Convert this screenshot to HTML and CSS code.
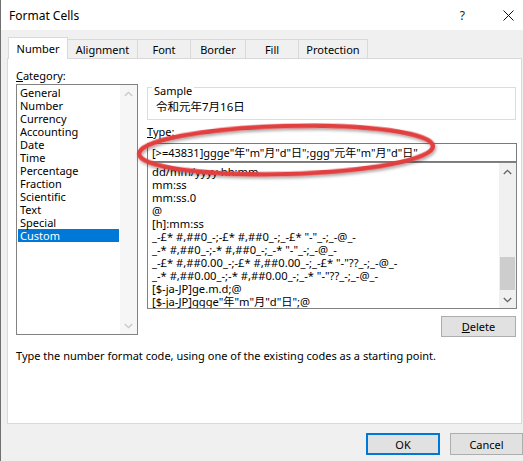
FILE: index.html
```html
<!DOCTYPE html>
<html lang="en">
<head>
<meta charset="utf-8">
<title>Format Cells</title>
<link rel="stylesheet" href="styles.css">
</head>
<body>
<div class="window">
  <div class="titlebar">
    <span class="title">Format Cells</span>
    <span class="help">?</span>
    <svg class="close" width="11" height="11" viewBox="0 0 11 11"><path d="M0.5 0.5 L10.5 10.5 M10.5 0.5 L0.5 10.5" stroke="#111" stroke-width="1" fill="none"/></svg>
  </div>
  <div class="content">
    <div class="tabs">
      <div class="tab active w-number">Number</div>
      <div class="tab w-align">Alignment</div>
      <div class="tab w-font">Font</div>
      <div class="tab w-border">Border</div>
      <div class="tab w-fill">Fill</div>
      <div class="tab w-prot">Protection</div>
    </div>
    <div class="panel">
      <div class="cols">
        <div class="left">
          <div class="label cat-label"><u>C</u>ategory:</div>
          <div class="listbox cat-list">
            <div class="rows cat-rows">
              <div class="row">General</div>
              <div class="row">Number</div>
              <div class="row">Currency</div>
              <div class="row">Accounting</div>
              <div class="row">Date</div>
              <div class="row">Time</div>
              <div class="row">Percentage</div>
              <div class="row">Fraction</div>
              <div class="row">Scientific</div>
              <div class="row">Text</div>
              <div class="row">Special</div>
              <div class="row selected">Custom</div>
            </div>
            <div class="scrollbar disabled">
              <div class="arrow"><svg width="9" height="6" viewBox="0 0 9 6"><path d="M0.8 5 L4.5 1.3 L8.2 5" fill="none" stroke="currentColor" stroke-width="1.3"/></svg></div>
              <div class="track"></div>
              <div class="arrow"><svg width="9" height="6" viewBox="0 0 9 6"><path d="M0.8 1 L4.5 4.7 L8.2 1" fill="none" stroke="currentColor" stroke-width="1.3"/></svg></div>
            </div>
          </div>
        </div>
        <div class="right">
          <fieldset class="sample">
            <legend>Sample</legend>
            <div class="sample-text">令和元年7月16日</div>
          </fieldset>
          <div class="label type-label"><u>T</u>ype:</div>
          <div class="input">[&gt;=43831]ggge"年"m"月"d"日";ggg"元年"m"月"d"日"</div>
          <div class="listbox type-list">
            <div class="rows type-rows">
              <div class="row">dd/mm/yyyy hh:mm</div>
              <div class="row">mm:ss</div>
              <div class="row">mm:ss.0</div>
              <div class="row">@</div>
              <div class="row">[h]:mm:ss</div>
              <div class="row">_-£* #,##0_-;-£* #,##0_-;_-£* "-"_-;_-@_-</div>
              <div class="row">_-* #,##0_-;-* #,##0_-;_-* "-"_-;_-@_-</div>
              <div class="row">_-£* #,##0.00_-;-£* #,##0.00_-;_-£* "-"??_-;_-@_-</div>
              <div class="row">_-* #,##0.00_-;-* #,##0.00_-;_-* "-"??_-;_-@_-</div>
              <div class="row">[$-ja-JP]ge.m.d;@</div>
              <div class="row">[$-ja-JP]ggge"年"m"月"d"日";@</div>
            </div>
            <div class="scrollbar">
              <div class="arrow"><svg width="9" height="6" viewBox="0 0 9 6"><path d="M0.8 5 L4.5 1.3 L8.2 5" fill="none" stroke="currentColor" stroke-width="1.3"/></svg></div>
              <div class="track"><div class="thumb"></div></div>
              <div class="arrow"><svg width="9" height="6" viewBox="0 0 9 6"><path d="M0.8 1 L4.5 4.7 L8.2 1" fill="none" stroke="currentColor" stroke-width="1.3"/></svg></div>
            </div>
          </div>
          <div class="delete-row"><button class="btn delete"><u>D</u>elete</button></div>
        </div>
      </div>
      <p class="desc">Type the number format code, using one of the existing codes as a starting point.</p>
    </div>
    <div class="footer">
      <button class="btn ok">OK</button>
      <button class="btn cancel">Cancel</button>
    </div>
  </div>
  <svg class="annotation" width="523" height="461" viewBox="0 0 523 461">
    <defs>
      <filter id="sh" x="-10%" y="-50%" width="120%" height="200%">
        <feDropShadow dx="1" dy="2" stdDeviation="1.5" flood-color="#000" flood-opacity="0.35"/>
      </filter>
    </defs>
    <ellipse cx="286" cy="150" rx="147" ry="24" transform="rotate(-1.5 286 150)" fill="none" stroke="#e23f3f" stroke-width="4.5" filter="url(#sh)"/>
  </svg>
</div>
</body>
</html>
```
FILE: styles.css
```css
* { box-sizing: border-box; }
html, body { margin: 0; padding: 0; }
body {
  width: 523px;
  height: 461px;
  overflow: hidden;
  background: #f0f0f0;
  font-family: "Noto Sans", "Noto Sans CJK JP", sans-serif;
  font-size: 11px;
  color: #000;
}
.window {
  position: relative;
  width: 523px;
  height: 461px;
  border-left: 1px solid #707070;
  background: #f0f0f0;
}
.titlebar {
  height: 30px;
  background: #fff;
  display: flex;
  align-items: center;
  padding-left: 8px;
  font-size: 12px;
}
.title { flex: 1; }
.help { font-size: 12px; color: #222; }
.close { margin-left: 38px; margin-right: 9px; }

.content { padding-top: 7px; }
.tabs {
  display: flex;
  align-items: flex-end;
  margin-left: 7px;
  height: 21px;
}
.tab {
  height: 19px;
  border: 1px solid #d9d9d9;
  border-bottom: none;
  margin-left: -1px;
  background: #f0f0f0;
  text-align: center;
  line-height: 18px;
  padding-top: 1px;
}
.tab:first-child { margin-left: 0; }
.tab.active {
  height: 22px;
  margin-bottom: -1px;
  background: #fff;
  position: relative;
  z-index: 1;
  line-height: 20px;
  padding-top: 1px;
}
.w-number { width: 60px; }
.w-align { width: 71px; }
.w-font { width: 54px; }
.w-border { width: 56px; }
.w-fill { width: 54px; }
.w-prot { width: 70px; }

.panel {
  margin-left: 6px;
  width: 515px;
  height: 366px;
  border: 1px solid #d9d9d9;
  background: #fff;
  padding-left: 8px;
}
.cols { display: flex; align-items: flex-start; }
.left { width: 122px; }
.label { line-height: 15px; }
.cat-label { margin-top: 9px; margin-bottom: 1px; }

.listbox {
  display: flex;
  border: 1px solid #828282;
  background: #fff;
}
.cat-list { height: 251px; }
.rows { flex: 1; overflow: hidden; white-space: nowrap; }
.row { height: 13px; line-height: 13px; }
.cat-rows { padding: 1px 1px 0 1px; }
.cat-rows .row { padding-left: 2px; }
.row.selected { background: #0078d7; color: #fff; }

.scrollbar {
  width: 17px;
  display: flex;
  flex-direction: column;
  background: #f0f0f0;
  color: #606060;
}
.scrollbar.disabled { background: #f6f6f6; color: #c8c8c8; }
.arrow {
  height: 17px;
  display: flex;
  align-items: center;
  justify-content: center;
}
.track { flex: 1; }
.thumb {
  margin-top: 77px;
  height: 33px;
  margin-left: 1px;
  margin-right: 1px;
  background: #cdcdcd;
}

.right { width: 370px; margin-left: 9px; }
.sample {
  margin: 17px 1px 0 0;
  padding: 0 0 4px 8px;
  border: 1px solid #dcdcdc;
  min-width: 0;
}
.sample legend {
  padding: 8px 2px 0 2px;
  margin-left: -4px;
  line-height: 14px;
}
.sample-text { line-height: 16px; margin-top: 1px; font-size: 11.5px; }
.type-label { margin-top: 4px; margin-bottom: 4px; }
.input {
  height: 19px;
  border: 1px solid #7a7a7a;
  padding-left: 4px;
  line-height: 17px;
  white-space: nowrap;
  overflow: hidden;
}
.type-list { height: 147px; }
.type-rows { padding: 2px 0 0 4px; font-size: 11.2px; }

.btn {
  font-family: inherit;
  font-size: 11px;
  color: #000;
  background: #e1e1e1;
  border: 1px solid #adadad;
  padding: 0;
  margin: 0;
}
.delete-row { display: flex; justify-content: flex-end; margin-top: 7px; padding-right: 1px; }
.delete { width: 75px; height: 21px; }
.desc { margin: 11px 0 0 0; line-height: 15px; }

.footer {
  display: flex;
  justify-content: flex-end;
  gap: 10px;
  margin-top: 9px;
}
.ok { width: 74px; height: 22px; border: 2px solid #0078d7; }
.cancel { width: 73px; height: 22px; }

.annotation {
  position: absolute;
  left: -1px;
  top: 0;
  pointer-events: none;
}
```
